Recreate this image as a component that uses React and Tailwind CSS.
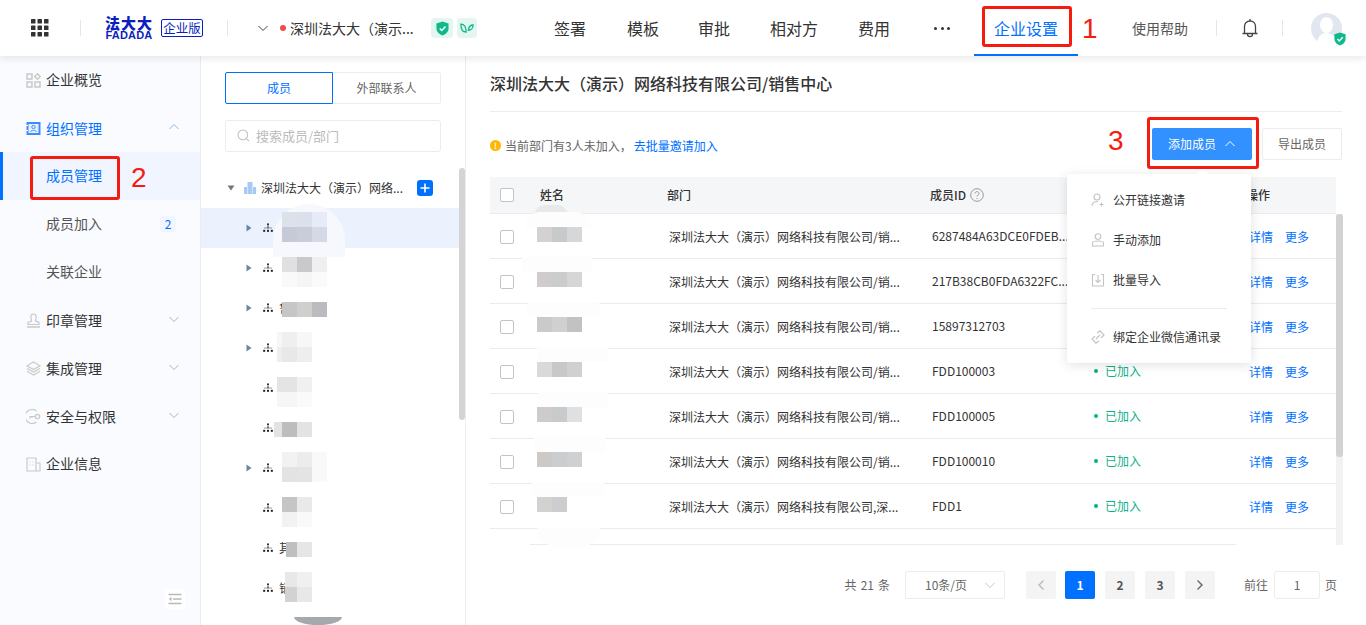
import React from "react";

const Chevron = ({ up, className = "" }) => (
  <svg viewBox="0 0 12 12" className={className} fill="none" stroke="currentColor" strokeWidth="1">
    <path d={up ? "M1.5 8 L6 3.5 L10.5 8" : "M1.5 4 L6 8.5 L10.5 4"} />
  </svg>
);

const ShieldCheck = ({ className = "" }) => (
  <svg viewBox="0 0 14 16" className={className}>
    <path d="M7 0.5 L13.5 2.5 V8 C13.5 12 10 14.5 7 15.5 C4 14.5 0.5 12 0.5 8 V2.5 Z" fill="#0fb98c" />
    <path d="M4 8 L6.2 10.2 L10.2 5.8" fill="none" stroke="#fff" strokeWidth="1.6" />
  </svg>
);

const Org = () => (
  <svg viewBox="0 0 11 11" className="w-[10px] h-[10px] shrink-0 mr-px text-[#222]" fill="currentColor">
    <rect x="4.5" y="0.5" width="2" height="2" />
    <rect x="5" y="3" width="1" height="3" />
    <rect x="1" y="5" width="9" height="1" opacity="0.5" />
    <rect x="0.2" y="7.5" width="2.2" height="2.2" />
    <rect x="4.4" y="7.5" width="2.2" height="2.2" />
    <rect x="8.6" y="7.5" width="2.2" height="2.2" />
  </svg>
);

const Tri = () => (
  <svg viewBox="0 0 6 8" className="-ml-px w-[6px] h-2 text-[#6b85a3]" fill="currentColor">
    <path d="M0.5 0.5 L5.5 4 L0.5 7.5 Z" />
  </svg>
);

const sideIcon = "w-[15px] h-[15px] shrink-0 text-[#c9c9c9]";
const IconOverview = () => (
  <svg viewBox="0 0 15 15" className={sideIcon} fill="none" stroke="currentColor" strokeWidth="1.5">
    <rect x="1" y="1" width="5" height="5" />
    <rect x="1" y="9" width="5" height="5" />
    <rect x="9" y="9" width="5" height="5" />
    <path d="M11.5 0.8 L14.2 3.5 L11.5 6.2 L8.8 3.5 Z" />
  </svg>
);
const IconOrg = () => (
  <svg viewBox="0 0 15 15" className="w-[15px] h-[15px] shrink-0">
    <rect x="0.5" y="1" width="14" height="13" fill="#3d8bfd" />
    <rect x="2.5" y="3" width="10" height="9" fill="#e8f1ff" />
    <circle cx="7.5" cy="6" r="1.7" fill="none" stroke="#3d8bfd" strokeWidth="1" />
    <path d="M4.5 11 C5 8.8 10 8.8 10.5 11" fill="none" stroke="#3d8bfd" strokeWidth="1" />
    <rect x="0" y="4" width="2" height="1" fill="#fff" />
    <rect x="0" y="9" width="2" height="1" fill="#fff" />
  </svg>
);
const IconSeal = () => (
  <svg viewBox="0 0 15 15" className={sideIcon} fill="none" stroke="currentColor" strokeWidth="1.2">
    <path d="M5.5 8 C5.5 6 4.8 5.5 4.8 3.8 C4.8 2 6 1 7.5 1 C9 1 10.2 2 10.2 3.8 C10.2 5.5 9.5 6 9.5 8 L13 9.5 V11.5 H2 V9.5 Z" />
    <path d="M1 14 H14" strokeWidth="1.5" />
  </svg>
);
const IconLayers = () => (
  <svg viewBox="0 0 15 15" className={sideIcon} fill="none" stroke="currentColor" strokeWidth="1.2">
    <path d="M7.5 1 L14 4.8 L7.5 8.5 L1 4.8 Z" />
    <path d="M1 7.5 L7.5 11 L14 7.5" />
    <path d="M1 10.2 L7.5 14 L14 10.2" />
  </svg>
);
const IconKey = () => (
  <svg viewBox="0 0 15 15" className={sideIcon} fill="none" stroke="currentColor" strokeWidth="1.2">
    <path d="M10.5 2 A7 7 0 1 0 10.5 13" />
    <circle cx="11.5" cy="7.5" r="2.2" />
    <path d="M9.3 7.5 H4 V9.5 M6 7.5 V9" />
  </svg>
);
const IconBuilding = () => (
  <svg viewBox="0 0 15 15" className={sideIcon} fill="none" stroke="currentColor" strokeWidth="1.2">
    <path d="M1 14 V1 H10 V14 Z M10 6 H14 V14 H10" />
    <path d="M3.5 5 H4.5 M6.5 5 H7.5 M3.5 8 H4.5 M6.5 8 H7.5" />
  </svg>
);

const treeRows = [
  { arrow: true, top: "top-[4px]", left: "left-[81px]", cols: "grid-cols-[15px_15px_15px]", px: ["bg-[#dde1ea]", "bg-[#dce0ea]", "bg-[#e6ebf7]", "bg-[#c5cad6]", "bg-[#c8cdda]", "bg-[#d5d9e6]"] },
  { arrow: true, top: "top-[9px]", left: "left-[81px]", cols: "grid-cols-[15px_15px_15px]", px: ["bg-[#e0e0e0]", "bg-[#c9c8ca]", "bg-[#efefef]", "bg-[#f9f9f9]", "bg-[#f5f5f5]", "bg-[#fafafa]"] },
  { arrow: true, text: "鲁", top: "top-[14px]", left: "left-[81px]", cols: "grid-cols-[15px_15px_15px]", px: ["bg-[#c6c6c6]", "bg-[#cfcfcd]", "bg-[#bcbcc0]"] },
  { arrow: true, top: "top-[4px]", left: "left-[76px]", cols: "grid-cols-[5px_15px_15px]", px: ["bg-[#f6f6f6]", "bg-[#efefef]", "bg-[#f7f7f7]", "bg-[#eeeeee]", "bg-[#e8e8e8]", "bg-[#eeeeee]"] },
  { top: "top-[9px]", left: "left-[76px]", cols: "grid-cols-[5px_15px_15px]", px: ["bg-[#e4e4e5]", "bg-[#e4e4e5]", "bg-[#f0f0f0]", "bg-[#f6f6f6]", "bg-[#f6f6f6]", "bg-[#fafafa]"] },
  { top: "top-[14px]", left: "left-[73px]", cols: "grid-cols-[8px_15px_15px]", px: ["bg-[#e3e3e3]", "bg-[#bdbdbd]", "bg-[#e3e3e3]"] },
  { arrow: true, top: "top-[4px]", left: "left-[81px]", cols: "grid-cols-[15px_15px_15px]", px: ["bg-[#f2f2f2]", "bg-[#ececec]", "bg-[#f9f9f9]", "bg-[#e3e3e3]", "bg-[#e4e4e4]", "bg-[#f9f9f9]"] },
  { top: "top-[9px]", left: "left-[81px]", cols: "grid-cols-[15px_15px]", px: ["bg-[#c5c5c5]", "bg-[#e9e9eb]", "bg-[#f2f2f2]", "bg-[#f9f9f9]"] },
  { text: "其", top: "top-[14px]", left: "left-[85px]", cols: "grid-cols-[11px_15px]", px: ["bg-[#bfbfbf]", "bg-[#e6e6e6]"] },
  { text: "销", top: "top-[4px]", left: "left-[84px]", cols: "grid-cols-[12px_15px]", px: ["bg-[#e8e8e8]", "bg-[#f0f0f0]", "bg-[#d2d2d2]", "bg-[#e8e8ea]"] },
];

const members = [
  { dept: "深圳法大大（演示）网络科技有限公司/销...", id: "6287484A63DCE0FDEB...", px: ["bg-[#d3d2d1]", "bg-[#c8cac9]", "bg-[#d6d7d8]"], hidden: true },
  { dept: "深圳法大大（演示）网络科技有限公司/销...", id: "217B38CB0FDA6322FC...", px: ["bg-[#cfcccb]", "bg-[#cbcccc]", "bg-[#d6d6d6]"], hidden: true },
  { dept: "深圳法大大（演示）网络科技有限公司/销...", id: "15897312703", px: ["bg-[#cacac8]", "bg-[#cfd0cf]", "bg-[#c1c2c4]"], hidden: true },
  { dept: "深圳法大大（演示）网络科技有限公司/销...", id: "FDD100003", px: ["bg-[#d9d9d9]", "bg-[#c8c8c6]", "bg-[#cfd0d2]"] },
  { dept: "深圳法大大（演示）网络科技有限公司/销...", id: "FDD100005", px: ["bg-[#cfcbcb]", "bg-[#c9cacc]", "bg-[#dfe0e2]"] },
  { dept: "深圳法大大（演示）网络科技有限公司/销...", id: "FDD100010", px: ["bg-[#cdc9c7]", "bg-[#cccdcf]", "bg-[#cfd0d2]"] },
  { dept: "深圳法大大（演示）网络科技有限公司,深...", id: "FDD1", px: ["bg-[#d2d2d0]", "bg-[#cdcdcf]"] },
];

const blobs = [
  "left-[535px] top-[205px] w-[32px] h-[9px] bg-[#e8e9e8] rounded-t-full",
  "left-[525px] top-[212px] w-[65px] h-[15px] bg-[#fdfdfd] rounded-t-[30px]",
  "left-[522px] top-[257px] w-[70px] h-[15px] bg-[#fdfdfd]",
  "left-[527px] top-[302px] w-[73px] h-[15px] bg-[#fdfdfd] rounded-sm",
  "left-[537px] top-[347px] w-[71px] h-[15px] bg-[#fdfdfd]",
  "left-[538px] top-[392px] w-[70px] h-[15px] bg-[#fdfdfd]",
  "left-[534px] top-[437px] w-[72px] h-[15px] bg-[#fdfdfd]",
  "left-[532px] top-[482px] w-[72px] h-[15px] bg-[#fdfdfd]",
  "left-[537px] top-[527px] w-[63px] h-[20px] bg-[#fdfdfd] rounded-b-[30px]",
  "left-[490px] top-[544px] w-[40px] h-[1px] bg-white",
];

const Checkbox = () => <span className="block w-[14px] h-[14px] border border-[#c4c4c4] rounded-[2px] bg-white" />;

const NavItem = ({ label, className = "" }) => <span className={"text-base text-[#333] " + className}>{label}</span>;

const SideItem = ({ icon, label, chevron, up, blue }) => (
  <div className="h-12 flex items-center pl-[26px] pr-[20px]">
    <span className="w-5 flex">{icon}</span>
    <span className={"text-[14px] " + (chevron ? "" : "pb-[2px] ") + (blue ? "text-[#0070ff]" : "text-[#333]")}>{label}</span>
    {chevron && <Chevron up={up} className={"w-3 h-3 ml-auto -mt-[2px] " + (up ? "text-[#8fb7ee]" : "text-[#b5b5b5]")} />}
  </div>
);

const MenuItem = ({ icon, label }) => (
  <div className="h-10 flex items-center pl-6">
    <span className="w-[22px] flex">{icon}</span>
    <span className="text-xs text-[#333]">{label}</span>
  </div>
);

const menuIcon = "w-[14px] h-[14px] text-[#c4c4c4]";
const rowGrid = "grid grid-cols-[50px_127px_263px_164px_155px_87px] items-center";

export default function App() {
  return (
    <div className="relative w-[1366px] h-[625px] overflow-hidden bg-white font-['Noto_Sans_CJK_SC','Noto_Sans',sans-serif]">
      {/* Header */}
      <header className="relative z-10 h-14 flex items-center bg-white shadow-[0_2px_8px_rgba(0,0,0,0.1)]">
        <svg viewBox="0 0 18 18" className="ml-[31px] w-[18px] h-[18px] text-[#333]" fill="currentColor">
          {[0, 6.5, 13].map((y) =>
            [0, 6.5, 13].map((x) => <rect key={x + "-" + y} x={x} y={y} width="4.5" height="4.5" rx="0.5" />)
          )}
        </svg>
        <span className="ml-[31px] w-px h-4 bg-[#e6e6e6]" />
        <div className="ml-6 w-12 flex flex-col items-center text-[#0c1fbe]">
          <span className="text-[15px] leading-[15px] tracking-[1px] font-black whitespace-nowrap">法大大</span>
          <span className="text-[11px] leading-[11px] font-black font-['Liberation_Sans',sans-serif] tracking-[0.2px]">FADADA</span>
        </div>
        <span className="ml-2 w-[42px] h-[18px] flex items-center justify-center border border-[#0c1fbe] rounded-[2px] text-[12.5px] leading-none text-[#0c1fbe] whitespace-nowrap">企业版</span>
        <span className="ml-6 w-px h-4 bg-[#e6e6e6]" />
        <Chevron className="ml-[29px] w-3 h-3 text-[#444]" />
        <span className="ml-[11px] w-[6px] h-[6px] rounded-full bg-[#f04b4b]" />
        <span className="ml-[4px] text-[14px] text-[#333] w-[124px] whitespace-nowrap">深圳法大大（演示...</span>
        <span className="ml-[17px] w-[22px] h-5 rounded bg-[#e3f6f0] flex items-center justify-center">
          <ShieldCheck className="w-[13px] h-[15px]" />
        </span>
        <span className="ml-1 w-5 h-5 rounded bg-[#e3f6f0] flex items-center justify-center">
          <svg viewBox="0 0 16 12" className="w-[14px] h-[11px]" fill="none" stroke="#0fb98c" strokeWidth="1.5">
            <path d="M1 1 C5 1 7 4 7 10 C3 10 1 6 1 1 Z" />
            <path d="M15 2 C12 2 10 4 9.5 8 C13 8 15 5 15 2 Z" />
          </svg>
        </span>
        <NavItem label="签署" className="ml-[77px]" />
        <NavItem label="模板" className="ml-[41px]" />
        <NavItem label="审批" className="ml-[39px]" />
        <NavItem label="相对方" className="ml-10" />
        <NavItem label="费用" className="ml-10" />
        <span className="ml-[44px] w-4 flex justify-between">
          <i className="w-[3px] h-[3px] rounded-full bg-[#333]" />
          <i className="w-[3px] h-[3px] rounded-full bg-[#333]" />
          <i className="w-[3px] h-[3px] rounded-full bg-[#333]" />
        </span>
        <div className="relative ml-6 w-[104px] h-14 flex items-center justify-center">
          <span className="text-base text-[#0070ff]">企业设置</span>
          <span className="absolute left-0 right-0 bottom-0 h-[2px] bg-[#0070ff]" />
        </div>
        <span className="ml-[54px] text-[14px] text-[#555] w-14 whitespace-nowrap">使用帮助</span>
        <span className="ml-[28px] w-px h-4 bg-[#e6e6e6]" />
        <svg viewBox="0 0 18 20" className="ml-6 w-[18px] h-5" fill="none" stroke="#444" strokeWidth="1.3">
          <path d="M9 1 V3 M3.5 15 V8.5 C3.5 5 6 3 9 3 C12 3 14.5 5 14.5 8.5 V15 M1.5 15.5 H16.5 M6.5 16 C6.5 19.5 11.5 19.5 11.5 16" />
        </svg>
        <span className="ml-[23px] w-px h-4 bg-[#e6e6e6]" />
        <div className="relative ml-[28px] w-[31px] h-[31px] rounded-full bg-[#e2e6f1] overflow-visible">
          <svg viewBox="0 0 31 31" className="w-[31px] h-[31px]">
            <ellipse cx="15.5" cy="12" rx="6.5" ry="8" fill="#fff" />
            <path d="M6 31 C7 22 11 20 15.5 20 C20 20 24 22 25 31 Z" fill="#fff" />
          </svg>
          <ShieldCheck className="absolute -right-1 bottom-[-2px] w-3 h-[14px]" />
        </div>
      </header>

      {/* Body */}
      <div className="flex h-[569px]">
        {/* Sidebar */}
        <aside className="relative w-[201px] shrink-0 bg-[#fafbfe] border-r border-[#ececec]">
          <SideItem icon={<IconOverview />} label="企业概览" />
          <SideItem icon={<IconOrg />} label="组织管理" chevron up blue />
          <div className="relative h-12 flex items-center pl-[46px] pb-[2px] bg-[#f0f5ff] text-[14px] text-[#0070ff]">
            <span className="absolute left-0 top-0 bottom-0 w-[3px] bg-[#0070ff]" />
            成员管理
          </div>
          <div className="h-12 flex items-center pl-[46px] pr-6 text-[14px] text-[#555]">
            <span className="pb-[2px]">成员加入</span>
            <span className="ml-auto w-4 h-4 rounded-sm bg-[#f0f5ff] text-xs text-[#0070ff] flex items-center justify-center">2</span>
          </div>
          <div className="h-12 flex items-center pl-[46px] pb-[2px] text-[14px] text-[#555]">关联企业</div>
          <SideItem icon={<IconSeal />} label="印章管理" chevron />
          <SideItem icon={<IconLayers />} label="集成管理" chevron />
          <SideItem icon={<IconKey />} label="安全与权限" chevron />
          <SideItem icon={<IconBuilding />} label="企业信息" />
          <span className="absolute left-[165px] top-[533px] w-5 h-5 bg-white flex items-center justify-center">
            <svg viewBox="0 0 14 12" className="w-[14px] h-3" fill="none" stroke="#b8b8b8" strokeWidth="1.3">
              <path d="M0.5 1.5 H13.5 M5 6 H13.5 M0.5 10.5 H13.5" />
              <path d="M3.5 3.8 L0.8 6 L3.5 8.2 Z" fill="#b8b8b8" stroke="none" />
            </svg>
          </span>
        </aside>

        {/* Tree panel */}
        <section className="relative w-[265px] shrink-0 border-r border-[#ececec] pt-4 overflow-hidden">
          <div className="ml-6 w-[216px] h-8 flex text-xs">
            <span className="w-[108px] flex items-center justify-center border border-[#0070ff] rounded-l-[2px] text-[#0070ff]">成员</span>
            <span className="w-[108px] flex items-center justify-center border border-l-0 border-[#ececec] rounded-r-[2px] text-[#666]">外部联系人</span>
          </div>
          <div className="ml-6 mt-4 w-[216px] h-8 flex items-center pl-[11px] pb-px gap-[6px] border border-[#ececec] rounded-[3px] text-[13px] text-[#bbb]">
            <svg viewBox="0 0 14 14" className="w-[13px] h-[13px]" fill="none" stroke="#c0c0c0" strokeWidth="1.1">
              <circle cx="6.3" cy="6.3" r="5.2" />
              <path d="M10 10 L13 13" />
            </svg>
            搜索成员/部门
          </div>
          <div className="mt-4 h-10 flex items-center pl-[26px]">
            <svg viewBox="0 0 8 6" className="w-2 h-[6px] text-[#777]" fill="currentColor">
              <path d="M0.5 0.5 H7.5 L4 5.5 Z" />
            </svg>
            <svg viewBox="0 0 12 12" className="ml-[9px] w-3 h-3" fill="#a9c9f5">
              <path d="M0 12 V5 H3 V12 Z M3.5 12 V0 H8.5 V12 Z M9 12 V5 H12 V12 Z" />
            </svg>
            <span className="ml-[5px] w-[143px] text-xs text-[#333] whitespace-nowrap">深圳法大大（演示）网络...</span>
            <span className="ml-[13px] w-4 h-4 rounded-[3px] bg-[#0070ff] flex items-center justify-center">
              <svg viewBox="0 0 10 10" className="w-[10px] h-[10px]" fill="none" stroke="#fff" strokeWidth="1.6">
                <path d="M5 0.5 V9.5 M0.5 5 H9.5" />
              </svg>
            </span>
          </div>
          {treeRows.map((r, i) => (
            <div key={i} className={"relative w-[258px] h-10 flex items-center pl-[46px] " + (i === 0 ? "bg-[#ebf2fe]" : "")}>
              <span className="w-4 flex">{r.arrow && <Tri />}</span>
              <Org />
              <span className="ml-[5px] text-xs text-[#333]">{r.text}</span>
              {i === 0 && <span className="absolute left-[72px] top-[-4px] w-[72px] h-[53px] bg-[#f6f8fe] rounded-t-[36px] z-10" />}
              <span className={"absolute z-10 grid auto-rows-[15px] " + r.top + " " + r.left + " " + r.cols}>
                {r.px.map((c, j) => (
                  <i key={j} className={c} />
                ))}
              </span>
            </div>
          ))}
          <span className="absolute left-[258px] top-[112px] w-[6px] h-[252px] rounded-[3px] bg-[#d4d4d4]" />
          <span className="absolute left-[93px] top-[561px] w-12 h-2 bg-[#a3a9ad] rounded-bl-[24px_8px] rounded-br-[24px_8px]" />
        </section>

        {/* Main */}
        <main className="flex-1 pl-6 min-w-0">
          <div className="w-[852px] h-[56px] pb-[2px] flex items-center border-b border-[#ececec] text-base font-medium text-[#333]">
            深圳法大大（演示）网络科技有限公司/销售中心
          </div>
          <div className="w-[852px] mt-4 h-8 flex items-center">
            <span className="mt-[3px] flex items-center">
              <span className="w-[11px] h-[11px] rounded-full bg-[#ffb800] text-white text-[8px] leading-[11px] font-bold text-center">!</span>
              <span className="ml-[4px] text-xs text-[#666]">当前部门有3人未加入，</span>
              <span className="ml-[2px] text-xs text-[#0070ff]">去批量邀请加入</span>
            </span>
            <span className="ml-auto w-[100px] h-8 flex items-center pl-4 gap-2 bg-[#3390ff] rounded-[2px] text-xs text-white">
              添加成员
              <Chevron up className="w-3 h-3 text-white" />
            </span>
            <span className="ml-[10px] w-20 h-8 flex items-center justify-center border border-[#ececec] rounded-[2px] text-xs text-[#666]">导出成员</span>
          </div>

          {/* Table */}
          <div className="mt-[17px] w-[853px]">
            <div className={"w-[846px] h-[37px] bg-[#f5f6f8] border-b border-[#e9ebf0] text-xs font-medium text-[#333] " + rowGrid}>
              <span className="pl-[10px]"><Checkbox /></span>
              <span>姓名</span>
              <span>部门</span>
              <span className="flex items-center gap-[4px]">
                成员ID
                <svg viewBox="0 0 14 14" className="w-[14px] h-[14px]" fill="none" stroke="#999" strokeWidth="1">
                  <circle cx="7" cy="7" r="6.3" />
                  <path d="M5 5.5 C5 3 9 3 9 5.5 C9 7 7 7 7 8.5 M7 10 V11" />
                </svg>
              </span>
              <span />
              <span className="-ml-[3px]">操作</span>
            </div>
            <div className="flex">
              <div className="w-[846px]">
                {members.map((m) => (
                  <div key={m.id} className={"h-[45px] pt-[2px] border-b border-[#e9ebf0] text-xs text-[#333] " + rowGrid}>
                    <span className="pl-[10px]"><Checkbox /></span>
                    <span className="self-start pt-[11px] -ml-[3px] flex relative z-10">
                      {m.px.map((c, j) => (
                        <i key={j} className={"w-[15px] h-[15px] " + c} />
                      ))}
                    </span>
                    <span className="pl-[2px] whitespace-nowrap">{m.dept}</span>
                    <span className="pl-[2px] pb-[2px] whitespace-nowrap">{m.id}</span>
                    {m.hidden ? (
                      <span />
                    ) : (
                      <span className="flex items-center gap-[7px] pb-[2px] text-[#10b28a]">
                        <i className="w-1 h-1 rounded-full bg-[#00b386]" />
                        已加入
                      </span>
                    )}
                    <span className="flex gap-3 text-[#0070ff] whitespace-nowrap">
                      <span>详情</span>
                      <span>更多</span>
                    </span>
                  </div>
                ))}
                <div className="w-[746px] h-4 border-b border-[#e9ebf0]" />
              </div>
              <div className="w-[7px] bg-[#f2f2f2]">
                <div className="h-[243px] bg-[#d2d2d2] rounded-[3px]" />
              </div>
            </div>
          </div>

          {/* Pagination */}
          <div className="mt-[26px] w-[847px] h-7 flex items-center justify-end text-xs text-[#666]">
            <span className="flex gap-[4px] whitespace-nowrap">
              <span>共</span>
              <span>21</span>
              <span>条</span>
            </span>
            <span className="ml-[15px] w-[100px] h-7 flex items-center justify-between pl-[19px] pr-2 border border-[#ececec] rounded-[2px]">
              10条/页
              <Chevron className="w-3 h-3 text-[#c8c8c8]" />
            </span>
            <span className="ml-[21px] w-[30px] h-7 flex items-center justify-center bg-[#f4f4f5] rounded-[2px] text-[#bbb]">
              <svg viewBox="0 0 8 12" className="w-2 h-3" fill="none" stroke="currentColor" strokeWidth="1.4"><path d="M6.5 1.5 L2 6 L6.5 10.5" /></svg>
            </span>
            <span className="ml-[9px] w-[30px] h-7 flex items-center justify-center bg-[#0070ff] rounded-[2px] text-white font-bold">1</span>
            <span className="ml-[10px] w-[30px] h-7 flex items-center justify-center bg-[#f4f4f5] rounded-[2px] text-[#555] font-bold">2</span>
            <span className="ml-[10px] w-[30px] h-7 flex items-center justify-center bg-[#f4f4f5] rounded-[2px] text-[#555] font-bold">3</span>
            <span className="ml-[10px] w-[30px] h-7 flex items-center justify-center bg-[#f4f4f5] rounded-[2px] text-[#666]">
              <svg viewBox="0 0 8 12" className="w-2 h-3" fill="none" stroke="currentColor" strokeWidth="1.4"><path d="M1.5 1.5 L6 6 L1.5 10.5" /></svg>
            </span>
            <span className="ml-[29px] whitespace-nowrap">前往</span>
            <span className="ml-[6px] w-[46px] h-7 flex items-center justify-center border border-[#ececec] rounded-[3px]">1</span>
            <span className="ml-[5px] whitespace-nowrap">页</span>
          </div>
        </main>
      </div>

      {/* Screenshot masks over the table */}
      {blobs.map((b, i) => (
        <span key={i} className={"absolute " + b} />
      ))}

      {/* Dropdown */}
      <div className="absolute z-20 left-[1067px] top-[174px] w-[184px] h-[189px] bg-white rounded-[3px] shadow-[0_2px_12px_rgba(0,0,0,0.12)] pt-[6px]">
        <span className="absolute left-[132px] -top-[4px] w-2 h-2 rotate-45 bg-white" />
        <MenuItem
          label="公开链接邀请"
          icon={
            <svg viewBox="0 0 14 14" className={menuIcon} fill="none" stroke="currentColor" strokeWidth="1.1">
              <circle cx="6" cy="4" r="3" />
              <path d="M1 13 C1 9.5 4 8.5 7 8.5 M10.5 9.5 V13.5 M8.5 11.5 H12.5" />
            </svg>
          }
        />
        <MenuItem
          label="手动添加"
          icon={
            <svg viewBox="0 0 14 14" className={menuIcon} fill="none" stroke="currentColor" strokeWidth="1.1">
              <circle cx="7" cy="3.5" r="2.8" />
              <path d="M1.5 13 V10 C1.5 8.5 3 8 7 8 C11 8 12.5 8.5 12.5 10 V13 Z" />
            </svg>
          }
        />
        <MenuItem
          label="批量导入"
          icon={
            <svg viewBox="0 0 14 14" className={menuIcon} fill="none" stroke="currentColor" strokeWidth="1.1">
              <path d="M4 1.5 H1.5 V13 H12.5 V1.5 H10 M7 2 V9 M4.5 7 L7 9.5 L9.5 7" />
            </svg>
          }
        />
        <div className="ml-6 mt-2 w-[136px] border-t border-[#ececec]" />
        <div className="mt-2">
          <MenuItem
            label="绑定企业微信通讯录"
            icon={
              <svg viewBox="0 0 14 14" className={menuIcon} fill="none" stroke="currentColor" strokeWidth="1.2">
                <path d="M6 3 L9 0.8 L13 5 L10 8 M8 11 L5 13.2 L1 9 L4 6 M5 9 L9 5" />
              </svg>
            }
          />
        </div>
      </div>

      {/* Annotations drawn on the screenshot */}
      <span className="absolute z-30 left-[982px] top-[6px] w-[90px] h-[41px] border-[3px] border-[#f51c0f] rounded-[3px]" />
      <span className="absolute z-30 left-[1082px] top-[10px] text-[28px] leading-[38px] text-[#f51c0f] font-['Liberation_Sans',sans-serif]">1</span>
      <span className="absolute z-30 left-[30px] top-[156px] w-[90px] h-[44px] border-[3px] border-[#f51c0f] rounded-[3px]" />
      <span className="absolute z-30 left-[131px] top-[159px] text-[28px] leading-[38px] text-[#f51c0f] font-['Liberation_Sans',sans-serif]">2</span>
      <span className="absolute z-30 left-[1147px] top-[117px] w-[112px] h-[52px] border-[3px] border-[#f51c0f] rounded-[3px]" />
      <span className="absolute z-30 left-[1108px] top-[122px] text-[28px] leading-[38px] text-[#f51c0f] font-['Liberation_Sans',sans-serif]">3</span>
    </div>
  );
}
